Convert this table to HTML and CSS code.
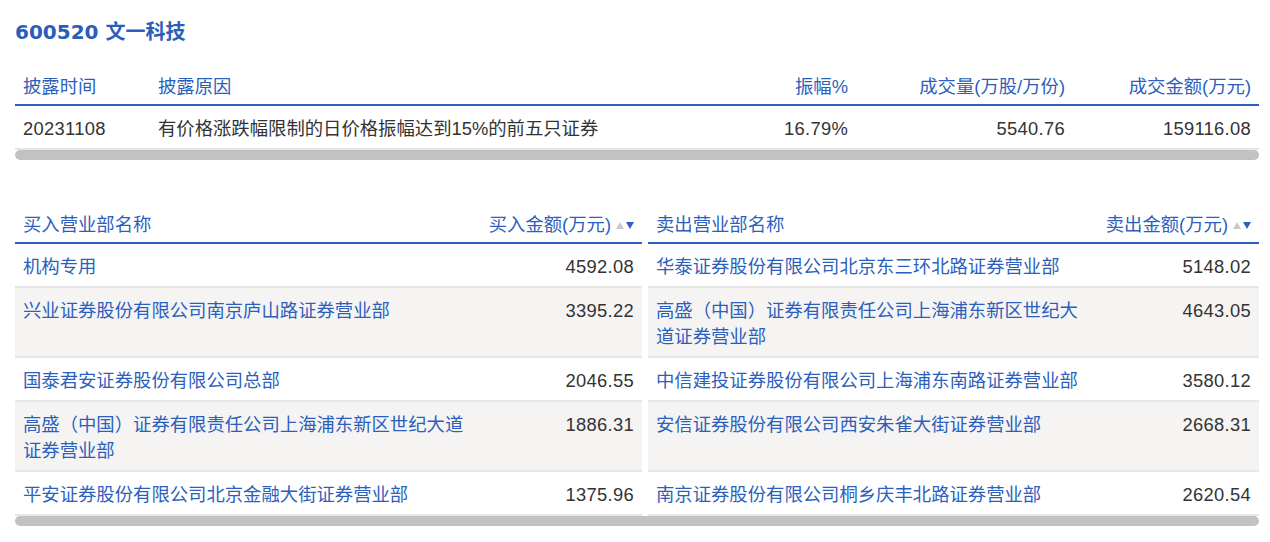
FILE: index.html
```html
<!DOCTYPE html>
<html lang="zh-CN">
<head>
<meta charset="utf-8">
<title>600520 文一科技</title>
<link rel="stylesheet" href="styles.css">
</head>
<body>
<div class="page">
  <h1 class="title"><span class="code">600520</span> 文一科技</h1>

  <div class="tbl1">
    <div class="t1-grid t1-head">
      <div class="cell">披露时间</div>
      <div class="cell">披露原因</div>
      <div class="cell right">振幅%</div>
      <div class="cell right">成交量(万股/万份)</div>
      <div class="cell right">成交金额(万元)</div>
    </div>
    <div class="t1-grid t1-row">
      <div class="cell num">20231108</div>
      <div class="cell">有价格涨跌幅限制的日价格振幅达到15%的前五只证券</div>
      <div class="cell right num">16.79%</div>
      <div class="cell right num">5540.76</div>
      <div class="cell right num">159116.08</div>
    </div>
    <div class="scroll"></div>
  </div>

  <div class="tbl2">
    <div class="t2-row t2-head">
      <div class="half">
        <div class="cell">买入营业部名称</div>
        <div class="cell sort">买入金额(万元)<svg class="arrows" width="18" height="7" viewBox="0 0 18 7"><polygon points="0,7 4,0 8,7" fill="#c9c9c9"/><polygon points="10,0 18,0 14,7" fill="#2c5fbd"/></svg></div>
      </div>
      <div class="half">
        <div class="cell">卖出营业部名称</div>
        <div class="cell sort">卖出金额(万元)<svg class="arrows" width="18" height="7" viewBox="0 0 18 7"><polygon points="0,7 4,0 8,7" fill="#c9c9c9"/><polygon points="10,0 18,0 14,7" fill="#2c5fbd"/></svg></div>
      </div>
    </div>

    <div class="t2-row t2-body">
      <div class="half">
        <div class="cell name">机构专用</div>
        <div class="cell right num">4592.08</div>
      </div>
      <div class="half">
        <div class="cell name">华泰证券股份有限公司北京东三环北路证券营业部</div>
        <div class="cell right num">5148.02</div>
      </div>
    </div>

    <div class="t2-row t2-body alt">
      <div class="half">
        <div class="cell name">兴业证券股份有限公司南京庐山路证券营业部</div>
        <div class="cell right num">3395.22</div>
      </div>
      <div class="half">
        <div class="cell name">高盛（中国）证券有限责任公司上海浦东新区世纪大道证券营业部</div>
        <div class="cell right num">4643.05</div>
      </div>
    </div>

    <div class="t2-row t2-body">
      <div class="half">
        <div class="cell name">国泰君安证券股份有限公司总部</div>
        <div class="cell right num">2046.55</div>
      </div>
      <div class="half">
        <div class="cell name">中信建投证券股份有限公司上海浦东南路证券营业部</div>
        <div class="cell right num">3580.12</div>
      </div>
    </div>

    <div class="t2-row t2-body alt">
      <div class="half">
        <div class="cell name">高盛（中国）证券有限责任公司上海浦东新区世纪大道证券营业部</div>
        <div class="cell right num">1886.31</div>
      </div>
      <div class="half">
        <div class="cell name">安信证券股份有限公司西安朱雀大街证券营业部</div>
        <div class="cell right num">2668.31</div>
      </div>
    </div>

    <div class="t2-row t2-body">
      <div class="half">
        <div class="cell name">平安证券股份有限公司北京金融大街证券营业部</div>
        <div class="cell right num">1375.96</div>
      </div>
      <div class="half">
        <div class="cell name">南京证券股份有限公司桐乡庆丰北路证券营业部</div>
        <div class="cell right num">2620.54</div>
      </div>
    </div>
    <div class="scroll"></div>
  </div>
</div>
</body>
</html>
```

FILE: styles.css
```css
html, body {
  margin: 0;
  padding: 0;
  background: #ffffff;
}

body {
  font-family: "Liberation Sans", "Noto Sans CJK SC", sans-serif;
  font-size: 18.35px;
  line-height: 26px;
  color: #333333;
}

.page {
  padding: 18px 11px 0 15px;
}

.title {
  margin: 0;
  font-family: "DejaVu Sans", "Noto Sans CJK SC", sans-serif;
  font-size: 20px;
  line-height: 28px;
  font-weight: 700;
  color: #2b5db9;
}

.tbl1 {
  margin-top: 22px;
}

.t1-grid {
  display: grid;
  grid-template-columns: 135px 1fr 150px 217px 186px;
}

.cell {
  padding: 10px 8px 6px;
}

.t1-head,
.t2-head .half {
  color: #2c5fbd;
  border-bottom: 2px solid #2c5fbd;
}

.t1-head .cell,
.t2-head .cell {
  padding-top: 6px;
  padding-bottom: 4px;
}

.t1-row {
  border-bottom: 2px solid #e6e6e6;
}

.right {
  text-align: right;
}

.num {
  letter-spacing: 0.3px;
  color: #333333;
}

.scroll {
  height: 10px;
  border-radius: 5px;
  background: #c2c2c2;
}

.tbl2 {
  margin-top: 46px;
}

.t2-row {
  display: grid;
  grid-template-columns: 627px 611px;
  column-gap: 6px;
}

.half {
  display: grid;
  grid-template-columns: 1fr 165px;
  align-items: start;
}

.t2-body .half {
  border-bottom: 2px solid #e6e6e6;
  background: #ffffff;
}

.t2-body.alt .half {
  background: #f5f4f3;
}

.name {
  color: #2c5fbd;
}

.sort {
  display: flex;
  justify-content: flex-end;
  align-items: center;
  gap: 5px;
  white-space: nowrap;
}

.arrows {
  display: block;
  margin-top: 1px;
}
```
